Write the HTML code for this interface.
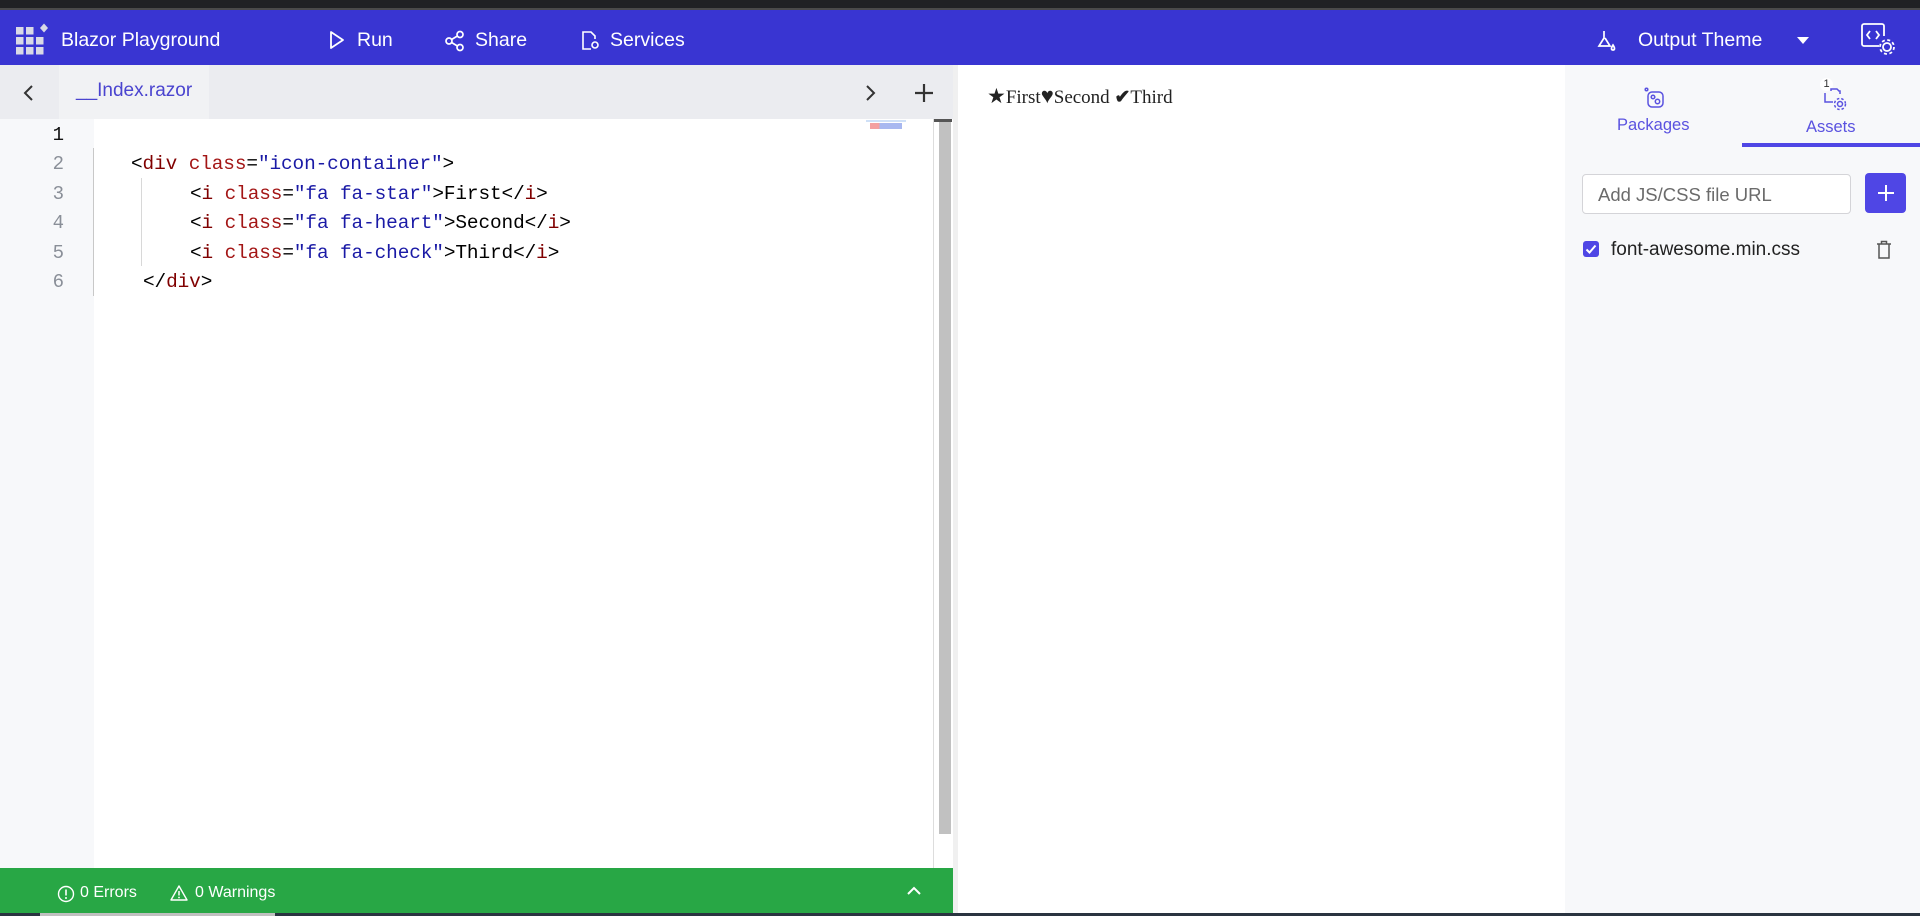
<!DOCTYPE html>
<html><head><meta charset="utf-8"><style>
*{box-sizing:border-box;margin:0;padding:0}
body{width:1920px;height:916px;overflow:hidden;background:#fff;font-family:"Liberation Sans",sans-serif;position:relative}
.abs{position:absolute}
#top{left:0;top:0;width:1920px;height:10px;background:#202124;border-bottom:2px solid #4a4a4a}
#hdr{left:0;top:10px;width:1920px;height:55px;background:#3935d2;color:#fff}
#hdr .t{position:absolute;top:3px;line-height:55px;font-size:19.5px;color:#fff}
#tabs{left:0;top:65px;width:953px;height:54px;background:#ebecf0}
#ed{left:0;top:119px;width:953px;height:749px;background:#fff}
#gut{left:0;top:119px;width:94px;height:749px;background:#f7f8fa}
.ln{position:absolute;left:0;width:64px;text-align:right;font:19px "Liberation Mono",monospace;color:#8a8f98;line-height:29.4px}
.cl{position:absolute;font:19.4px "Liberation Mono",monospace;line-height:29.4px;white-space:pre;color:#000;letter-spacing:-0.1px}
.tg{color:#800000}.at{color:#a31515}.st{color:#1a1aa6}
#stat{left:0;top:868px;width:953px;height:45px;background:#28a745;color:#fff;font-size:16px}
#bot{left:0;top:913px;width:1920px;height:3px;background:#2a3440}
#right{left:1565px;top:65px;width:355px;height:848px;background:#f7f8fa}
</style></head><body>
<div id="top" class="abs"></div>
<div id="hdr" class="abs">
 <svg class="abs" style="left:16px;top:12px" width="36" height="34" viewBox="0 0 36 32">
  <g fill="#d9d9e6"><rect x="0" y="4" width="7.5" height="7.5"/><rect x="10" y="4" width="7.5" height="7.5"/><rect x="0" y="14" width="7.5" height="7.5"/><rect x="10" y="14" width="7.5" height="7.5"/><rect x="20" y="14" width="7.5" height="7.5"/><rect x="0" y="24" width="7.5" height="7.5"/><rect x="10" y="24" width="7.5" height="7.5"/><rect x="20" y="24" width="7.5" height="7.5"/><path d="M24 5 L28 0.5 L32 5 L28 9.5Z"/></g></svg>
 <span class="t" style="left:61px">Blazor Playground</span>
 <svg class="abs" style="left:328px;top:19px" width="18" height="22" viewBox="0 0 18 22"><path d="M3 3 L15 11 L3 19Z" fill="none" stroke="#fff" stroke-width="1.8" stroke-linejoin="round"/></svg>
 <span class="t" style="left:357px">Run</span>
 <svg class="abs" style="left:444px;top:20px" width="22" height="22" viewBox="0 0 22 22"><g fill="none" stroke="#fff" stroke-width="1.7"><circle cx="16" cy="4.5" r="3"/><circle cx="5" cy="11" r="3"/><circle cx="16" cy="17.5" r="3"/><path d="M7.6 9.5 L13.4 6 M7.6 12.5 L13.4 16"/></g></svg>
 <span class="t" style="left:475px">Share</span>
 <svg class="abs" style="left:580px;top:19px" width="22" height="24" viewBox="0 0 22 24"><g fill="none" stroke="#fff" stroke-width="1.6"><path d="M11 20 H3 V3 H11 L15 7 V10"/><circle cx="15" cy="16" r="3"/></g></svg>
 <span class="t" style="left:610px">Services</span>
 <svg class="abs" style="left:1596px;top:19px" width="22" height="26" viewBox="0 0 22 26"><g fill="none" stroke="#fff" stroke-width="1.7"><path d="M8 2 V9 L3 17 H14 L9 9"/><path d="M17 16 C15 19 15 21 17 21 C19 21 19 19 17 16Z"/></g></svg>
 <span class="t" style="left:1638px">Output Theme</span>
 <svg class="abs" style="left:1796px;top:25px" width="14" height="10"><path d="M1 2 L13 2 L7 9Z" fill="#fff"/></svg>
 <svg class="abs" style="left:1860px;top:12px" width="38" height="36" viewBox="0 0 38 36"><g fill="none" stroke="#fff" stroke-width="1.8"><path d="M19 24 H4 a2 2 0 0 1 -2 -2 V4 a2 2 0 0 1 2 -2 H22 a2 2 0 0 1 2 2 V14"/><path d="M10 9 L7 13 L10 17 M16 9 L19 13 L16 17"/><circle cx="27" cy="25" r="4"/><circle cx="27" cy="25" r="7" stroke-dasharray="3 2.5"/></g></svg>
</div>
<div id="tabs" class="abs">
 <div class="abs" style="left:59px;top:0;width:150px;height:54px;background:#f1f2f4"></div>
 <svg class="abs" style="left:22px;top:19px" width="14" height="18"><path d="M10 2 L3 9 L10 16" fill="none" stroke="#333" stroke-width="2"/></svg>
 <span class="abs" style="left:76px;top:15px;font-size:19px;color:#4a44cf">__Index.razor</span>
 <svg class="abs" style="left:863px;top:19px" width="14" height="18"><path d="M4 2 L11 9 L4 16" fill="none" stroke="#333" stroke-width="2"/></svg>
 <svg class="abs" style="left:914px;top:18px" width="20" height="20"><path d="M10 1 V19 M1 10 H19" stroke="#333" stroke-width="2.2"/></svg>
</div>
<div class="abs" style="left:953px;top:65px;width:5px;height:848px;background:#f0f0f0"></div>
<div id="ed" class="abs"></div>
<div id="gut" class="abs"></div>
<div class="abs" style="left:93px;top:148px;width:1px;height:148px;background:#c8c8c8"></div>
<div class="abs" style="left:141px;top:178px;width:1px;height:88px;background:#d8d8d8"></div>
<div class="ln" style="top:121px;color:#111">1</div>
<div class="ln" style="top:150.4px">2</div>
<div class="ln" style="top:179.8px">3</div>
<div class="ln" style="top:209.2px">4</div>
<div class="ln" style="top:238.6px">5</div>
<div class="ln" style="top:268px">6</div>
<div class="cl" style="left:131px;top:150.4px"><span>&lt;</span><span class="tg">div</span> <span class="at">class</span>=<span class="st">"icon-container"</span>&gt;</div>
<div class="cl" style="left:190px;top:179.8px">&lt;<span class="tg">i</span> <span class="at">class</span>=<span class="st">"fa fa-star"</span>&gt;First&lt;/<span class="tg">i</span>&gt;</div>
<div class="cl" style="left:190px;top:209.2px">&lt;<span class="tg">i</span> <span class="at">class</span>=<span class="st">"fa fa-heart"</span>&gt;Second&lt;/<span class="tg">i</span>&gt;</div>
<div class="cl" style="left:190px;top:238.6px">&lt;<span class="tg">i</span> <span class="at">class</span>=<span class="st">"fa fa-check"</span>&gt;Third&lt;/<span class="tg">i</span>&gt;</div>
<div class="cl" style="left:143px;top:268px">&lt;/<span class="tg">div</span>&gt;</div>
<div class="abs" style="left:866px;top:120px;width:40px;height:2px;background:#cfe0f7"></div>
<div class="abs" style="left:870px;top:123px;width:32px;height:6px;background:linear-gradient(90deg,#f4a0a0 30%,#a8b8f0 30%)"></div>
<div class="abs" style="left:933px;top:119px;width:1px;height:749px;background:#ddd"></div>
<div class="abs" style="left:934px;top:119px;width:18px;height:3px;background:#555"></div>
<div class="abs" style="left:939px;top:122px;width:12px;height:712px;background:#c1c1c1"></div>
<div id="stat" class="abs">
 <svg class="abs" style="left:57px;top:17px" width="18" height="18" viewBox="0 0 18 18"><circle cx="9" cy="9" r="7.5" fill="none" stroke="#fff" stroke-width="1.4"/><path d="M9 4.5 V10.5" stroke="#fff" stroke-width="1.6"/><circle cx="9" cy="13" r="1" fill="#fff"/></svg>
 <span class="abs" style="left:80px;top:16px">0 Errors</span>
 <svg class="abs" style="left:170px;top:16px" width="18" height="18" viewBox="0 0 18 18"><path d="M9 2 L17 16 H1Z" fill="none" stroke="#fff" stroke-width="1.4" stroke-linejoin="round"/><path d="M9 7 V11.5" stroke="#fff" stroke-width="1.5"/><circle cx="9" cy="13.5" r=".9" fill="#fff"/></svg>
 <span class="abs" style="left:195px;top:16px">0 Warnings</span>
 <svg class="abs" style="left:906px;top:17px" width="16" height="12"><path d="M2 9 L8 3 L14 9" fill="none" stroke="#fff" stroke-width="2"/></svg>
</div>
<div id="bot" class="abs"></div>
<div class="abs" style="left:40px;top:913px;width:235px;height:3px;background:#c0c0c0"></div>
<div class="abs" style="left:987px;top:83px;font:19px 'Liberation Serif',serif;color:#222;white-space:nowrap"><span style="font-size:21px">★</span>First<span style="font-size:22px">♥</span>Second <b>✔</b>Third</div>
<div id="right" class="abs">
 <svg class="abs" style="left:79px;top:22px" width="22" height="24" viewBox="0 0 22 24"><g fill="none" stroke="#5a52e0" stroke-width="1.5"><circle cx="2.5" cy="2.5" r="1.3"/><rect x="4" y="5" width="15" height="15" rx="4"/><circle cx="9" cy="10" r="1.8"/><circle cx="13.5" cy="14.5" r="2.2"/></g></svg>
 <span class="abs" style="left:52px;top:51px;font-size:16.5px;color:#5a52e0">Packages</span>
 <div class="abs" style="left:255px;top:13px;width:13px;height:13px;border-radius:50%;background:#fff;font-size:11px;text-align:center;line-height:13px;color:#333">1</div>
 <svg class="abs" style="left:258px;top:22px" width="28" height="28" viewBox="0 0 28 28"><g fill="none" stroke="#5a52e0" stroke-width="1.5"><path d="M8 4 V2 H14 L16 4 H17 V7 M2 6 V15 H10"/><circle cx="17" cy="17" r="2.5"/><circle cx="17" cy="17" r="5.5" stroke-dasharray="2.5 2"/></g></svg>
 <span class="abs" style="left:241px;top:53px;font-size:16.5px;color:#5a52e0">Assets</span>
 <div class="abs" style="left:177px;top:78px;width:178px;height:4px;background:#4f46e5"></div>
 <div class="abs" style="left:17px;top:109px;width:269px;height:40px;background:#fff;border:1px solid #d4d4d8;border-radius:4px;font-size:18.5px;color:#6b6b6b;padding:9px 0 0 15px">Add JS/CSS file URL</div>
 <div class="abs" style="left:300px;top:108px;width:41px;height:40px;background:#4f46e5;border-radius:4px"><svg style="position:absolute;left:11px;top:10px" width="20" height="20"><path d="M10 2 V18 M2 10 H18" stroke="#fff" stroke-width="2"/></svg></div>
 <div class="abs" style="left:18px;top:176px;width:16px;height:16px;background:#4f46e5;border-radius:3px"><svg width="16" height="16"><path d="M3.5 8.5 L6.5 11.5 L12.5 4.5" fill="none" stroke="#fff" stroke-width="2"/></svg></div>
 <span class="abs" style="left:46px;top:174px;font-size:19px;color:#222">font-awesome.min.css</span>
 <svg class="abs" style="left:311px;top:175px" width="16" height="20" viewBox="0 0 16 20"><g fill="none" stroke="#555" stroke-width="1.5"><path d="M1 4 H15 M5.5 4 V1.5 H10.5 V4 M3 4 V18 H13 V4"/></g></svg>
</div>
</body></html>
